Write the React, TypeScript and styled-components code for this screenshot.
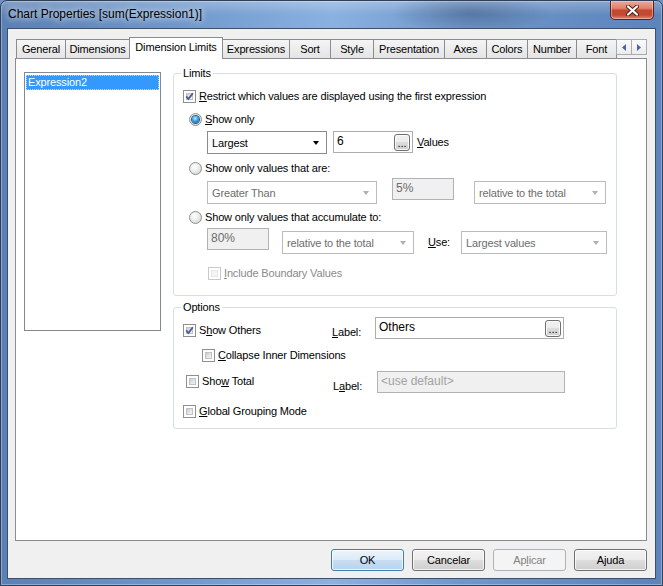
import React from "react";
import styled, { createGlobalStyle } from "styled-components";

const GlobalStyle = createGlobalStyle`
  html, body {
    margin: 0;
    padding: 0;
    background: #6f93c4;
  }
  body {
    font-family: "Liberation Sans", Arial, sans-serif;
    font-size: 11px;
    letter-spacing: -0.15px;
    color: #000;
  }
  *, *::before, *::after {
    box-sizing: border-box;
  }
`;

const Window = styled.div`
  width: 663px;
  height: 586px;
  display: flex;
  flex-direction: column;
  padding: 0 6px 6px;
  border: 1px solid #2f3f57;
  border-radius: 7px 7px 0 0;
  background:
    radial-gradient(ellipse 80px 20px at 470px 12px, rgba(40, 60, 95, 0.35), rgba(40, 60, 95, 0) 100%),
    linear-gradient(180deg, rgba(255, 255, 255, 0.25) 0, rgba(255, 255, 255, 0) 14px),
    linear-gradient(90deg, #5a80b4 0%, #7199cc 28%, #8ab1e0 50%, #7097ca 70%, #5c84bb 100%);
  box-shadow: inset 0 0 0 1px rgba(255, 255, 255, 0.3);
`;

const TitleBar = styled.div`
  height: 27px;
  display: flex;
  align-items: flex-start;
  justify-content: space-between;
`;

const Title = styled.div`
  padding-left: 1px;
  font-size: 12px;
  letter-spacing: 0;
  line-height: 27px;
  text-shadow: 0 0 6px rgba(255, 255, 255, 0.9), 0 0 10px rgba(255, 255, 255, 0.6);
`;

const CloseButton = styled.div`
  width: 44px;
  height: 19px;
  margin-right: 2px;
  display: flex;
  align-items: center;
  justify-content: center;
  border: 1px solid #5e2218;
  border-top: none;
  border-radius: 0 0 5px 5px;
  background: linear-gradient(180deg, #e9a99a 0%, #dc8270 40%, #c7452c 52%, #c24a33 78%, #dc8b73 100%);
  box-shadow: inset 0 0 0 1px rgba(255, 220, 210, 0.45);
`;

const Client = styled.div`
  flex: 1;
  display: flex;
  flex-direction: column;
  padding: 8px 8px 7px 7px;
  border: 1px solid #3e5069;
  background: #f0f0f0;
`;

const TabRow = styled.div`
  height: 21px;
  display: flex;
  align-items: flex-end;
  padding-left: 1px;
`;

const Tab = styled.div<{ $w: number; $active?: boolean }>`
  position: relative;
  z-index: ${(p) => (p.$active ? 2 : 1)};
  flex: none;
  width: ${(p) => p.$w}px;
  height: ${(p) => (p.$active ? 22 : 19)}px;
  margin-left: -1px;
  margin-bottom: ${(p) => (p.$active ? -1 : 0)}px;
  border: 1px solid #898c95;
  border-bottom: none;
  background: ${(p) => (p.$active ? "#fff" : "linear-gradient(180deg, #f5f5f5 0%, #e4e4e4 100%)")};
  text-align: center;
  line-height: 18px;
  white-space: nowrap;
  overflow: hidden;

  &:first-child {
    margin-left: 0;
  }
`;

const ScrollButtons = styled.div`
  position: relative;
  z-index: 3;
  display: flex;
  align-self: flex-start;
  margin-top: 2px;
  margin-left: -1px;
`;

const ScrollButton = styled.div`
  width: 16px;
  height: 16px;
  display: flex;
  align-items: center;
  justify-content: center;
  border: 1px solid #a9adb3;
  background: linear-gradient(180deg, #fbfbfb 0%, #ececec 100%);

  & + & {
    margin-left: -1px;
  }
`;

const TabPanel = styled.div`
  flex: 1;
  display: flex;
  align-items: flex-start;
  gap: 12px;
  padding: 8px 0 0 8px;
  border: 1px solid #898c95;
  background: #fff;
`;

const ListBox = styled.div`
  flex: none;
  width: 137px;
  height: 259px;
  margin-top: 5px;
  padding: 2px 1px;
  border: 1px solid #828790;
  background: #fff;
`;

const ListItem = styled.div<{ $selected?: boolean }>`
  height: 15px;
  padding-left: 1px;
  line-height: 13px;
  border: 1px dotted ${(p) => (p.$selected ? "#bcdcff" : "transparent")};
  background: ${(p) => (p.$selected ? "#3399ff" : "transparent")};
  color: ${(p) => (p.$selected ? "#fff" : "#000")};
`;

const Column = styled.div`
  flex: none;
  width: 444px;
  display: flex;
  flex-direction: column;
`;

const Group = styled.fieldset<{ $top?: number }>`
  margin: ${(p) => p.$top ?? 0}px 0 0 0;
  padding: 0;
  min-width: 0;
  border: 1px solid #d5dfe5;
  border-radius: 3px;
`;

const GroupTitle = styled.legend`
  margin-left: 7px;
  padding: 0 2px;
  line-height: 13px;
`;

const GroupBody = styled.div<{ $pb: number }>`
  display: flex;
  flex-direction: column;
  align-items: flex-start;
  padding: 0 0 ${(p) => p.$pb}px 9px;
`;

const Line = styled.div<{ $top?: number; $indent?: number; $w?: number }>`
  flex: none;
  display: flex;
  align-items: center;
  gap: 3px;
  height: 16px;
  width: ${(p) => (p.$w ? `${p.$w}px` : "auto")};
  margin-top: ${(p) => p.$top ?? 0}px;
  margin-left: ${(p) => p.$indent ?? 0}px;
`;

const ControlRow = styled.div<{ $top: number; $indent?: number; $h: number }>`
  display: flex;
  align-items: flex-start;
  height: ${(p) => p.$h}px;
  margin-top: ${(p) => p.$top}px;
  margin-left: ${(p) => p.$indent ?? 0}px;
`;

const Text = styled.span<{ $disabled?: boolean }>`
  white-space: nowrap;
  line-height: 16px;
  color: ${(p) => (p.$disabled ? "#8a8a8a" : "#000")};
`;

const U = styled.span`
  text-decoration: underline;
`;

const StaticLabel = styled.span<{ $w?: number; $top?: number; $ml?: number; $lh?: number }>`
  flex: none;
  width: ${(p) => (p.$w ? `${p.$w}px` : "auto")};
  margin-top: ${(p) => p.$top ?? 0}px;
  margin-left: ${(p) => p.$ml ?? 0}px;
  line-height: ${(p) => p.$lh ?? 16}px;
  white-space: nowrap;
`;

const CheckFrame = styled.span<{ $disabled?: boolean }>`
  position: relative;
  flex: none;
  display: flex;
  width: 13px;
  height: 13px;
  padding: 2px;
  border: 1px solid ${(p) => (p.$disabled ? "#c8c8c8" : "#8e8f8f")};
  background: #fff;
`;

const CheckFill = styled.span<{ $disabled?: boolean }>`
  flex: 1;
  border: 1px solid ${(p) => (p.$disabled ? "#e6e6e6" : "#bfc2c6")};
  background: ${(p) =>
    p.$disabled ? "#f4f4f4" : "linear-gradient(135deg, #c8cbcf 0%, #e4e5e7 55%, #f4f4f4 100%)"};
`;

const CheckMark = styled.svg`
  position: absolute;
  left: 0;
  top: 0;
`;

const RadioFrame = styled.span<{ $checked?: boolean }>`
  flex: none;
  display: flex;
  align-items: center;
  justify-content: center;
  width: 13px;
  height: 13px;
  border-radius: 50%;
  border: 1px solid #8e8f8f;
  background: radial-gradient(circle at 40% 35%, #ffffff 0%, #ececec 45%, #c9cccf 100%);

  &::after {
    content: "";
    display: ${(p) => (p.$checked ? "block" : "none")};
    width: 7px;
    height: 7px;
    border-radius: 50%;
    background: radial-gradient(circle at 45% 35%, #c2f0ff 0%, #3c9be0 45%, #0c4c8a 100%);
    box-shadow: 0 0 0 1px #1d5a93;
  }
`;

const Combo = styled.div<{ $w: number; $ml?: number; $top?: number; $disabled?: boolean }>`
  flex: none;
  display: flex;
  align-items: center;
  width: ${(p) => p.$w}px;
  height: 23px;
  margin-left: ${(p) => p.$ml ?? 0}px;
  margin-top: ${(p) => p.$top ?? 0}px;
  padding-left: 4px;
  border: 1px solid ${(p) => (p.$disabled ? "#b8bcbf" : "#8b8b8b")};
  background: #fff;
  color: ${(p) => (p.$disabled ? "#6d6d6d" : "#000")};
`;

const ComboValue = styled.span`
  flex: 1;
  white-space: nowrap;
  overflow: hidden;
`;

const ComboArrow = styled.span<{ $disabled?: boolean }>`
  flex: none;
  width: 0;
  height: 0;
  margin-right: 7px;
  border-left: 3.5px solid transparent;
  border-right: 3.5px solid transparent;
  border-top: 4px solid ${(p) => (p.$disabled ? "#b0b0b0" : "#000")};
`;

const TextBox = styled.div<{ $w: number; $ml?: number; $top?: number; $disabled?: boolean }>`
  flex: none;
  display: flex;
  align-items: flex-start;
  justify-content: space-between;
  width: ${(p) => p.$w}px;
  height: 22px;
  margin-left: ${(p) => p.$ml ?? 0}px;
  margin-top: ${(p) => p.$top ?? 0}px;
  padding: 2px 2px 0 3px;
  border: 1px solid ${(p) => (p.$disabled ? "#b0b3b6" : "#abadb3")};
  background: ${(p) => (p.$disabled ? "#f0f0f0" : "#fff")};
  color: ${(p) => (p.$disabled ? "#6d6d6d" : "#000")};
  font-size: 12px;
  letter-spacing: 0;
  line-height: 14px;
  white-space: nowrap;
`;

const Placeholder = styled.span`
  color: #a2a2a2;
`;

const EllipsisButton = styled.span`
  flex: none;
  display: flex;
  align-items: flex-end;
  justify-content: center;
  width: 16px;
  height: 17px;
  padding-bottom: 3px;
  border: 1px solid #707070;
  border-radius: 3px;
  background: linear-gradient(180deg, #f2f2f2 0%, #ebebeb 50%, #dddddd 50%, #cfcfcf 100%);
  box-shadow: inset 0 0 0 1px rgba(255, 255, 255, 0.8);
  color: #000;
  font-size: 11px;
  line-height: 8px;
  letter-spacing: 0;
`;

const ButtonRow = styled.div`
  display: flex;
  justify-content: flex-end;
  gap: 8px;
  margin-top: 8px;
`;

const DialogButton = styled.div<{ $kind?: "default" | "disabled" }>`
  width: 73px;
  height: 22px;
  display: flex;
  align-items: center;
  justify-content: center;
  border-radius: 3px;
  border: 1px solid
    ${(p) => (p.$kind === "default" ? "#3c7fb1" : p.$kind === "disabled" ? "#adb2b5" : "#707070")};
  background: ${(p) =>
    p.$kind === "default"
      ? "linear-gradient(180deg, #eaf4fc 0%, #dcebf8 50%, #c8ddf1 51%, #b9d4ee 100%)"
      : p.$kind === "disabled"
      ? "#f4f4f4"
      : "linear-gradient(180deg, #f2f2f2 0%, #ebebeb 50%, #dddddd 51%, #cfcfcf 100%)"};
  box-shadow: ${(p) => (p.$kind === "disabled" ? "none" : "inset 0 0 0 1px rgba(255, 255, 255, 0.75)")};
  color: ${(p) => (p.$kind === "disabled" ? "#838383" : "#000")};
`;

const tabs = [
  { label: "General", w: 50 },
  { label: "Dimensions", w: 65 },
  { label: "Dimension Limits", w: 94, active: true },
  { label: "Expressions", w: 68 },
  { label: "Sort", w: 42 },
  { label: "Style", w: 44 },
  { label: "Presentation", w: 72 },
  { label: "Axes", w: 43 },
  { label: "Colors", w: 42 },
  { label: "Number", w: 50 },
  { label: "Font", w: 41 },
];

function Check({ checked, disabled }: { checked?: boolean; disabled?: boolean }) {
  return (
    <CheckFrame $disabled={disabled}>
      <CheckFill $disabled={disabled} />
      {checked && (
        <CheckMark width="11" height="11" viewBox="0 0 11 11">
          <path d="M2.2 5.4 L4.4 8 L8.9 2.2" fill="none" stroke="#4a5c92" strokeWidth="1.8" />
        </CheckMark>
      )}
    </CheckFrame>
  );
}

function ArrowGlyph({ dir }: { dir: "left" | "right" }) {
  return (
    <svg width="4" height="7" viewBox="0 0 4 7">
      <path d={dir === "left" ? "M4 0 L0 3.5 L4 7 Z" : "M0 0 L4 3.5 L0 7 Z"} fill="#4c64a6" />
    </svg>
  );
}

export default function App() {
  return (
    <>
      <GlobalStyle />
      <Window>
        <TitleBar>
          <Title>Chart Properties [sum(Expression1)]</Title>
          <CloseButton>
            <svg width="13" height="11" viewBox="0 0 13 11">
              <path d="M2 1.5 L11 9.5 M11 1.5 L2 9.5" stroke="#4a1a10" strokeWidth="4" strokeLinecap="round" />
              <path d="M2 1.5 L11 9.5 M11 1.5 L2 9.5" stroke="#fff" strokeWidth="2.3" strokeLinecap="round" />
            </svg>
          </CloseButton>
        </TitleBar>

        <Client>
          <TabRow>
            {tabs.map((t) => (
              <Tab key={t.label} $w={t.w} $active={t.active}>
                {t.label}
              </Tab>
            ))}
            <ScrollButtons>
              <ScrollButton>
                <ArrowGlyph dir="left" />
              </ScrollButton>
              <ScrollButton>
                <ArrowGlyph dir="right" />
              </ScrollButton>
            </ScrollButtons>
          </TabRow>

          <TabPanel>
            <ListBox>
              <ListItem $selected>Expression2</ListItem>
            </ListBox>

            <Column>
              <Group>
                <GroupTitle>Limits</GroupTitle>
                <GroupBody $pb={14}>
                  <Line $top={8}>
                    <Check checked />
                    <Text>
                      <U>R</U>estrict which values are displayed using the first expression
                    </Text>
                  </Line>

                  <Line $top={7} $indent={6}>
                    <RadioFrame $checked />
                    <Text>
                      <U>S</U>how only
                    </Text>
                  </Line>
                  <ControlRow $top={4} $indent={24} $h={23}>
                    <Combo $w={120}>
                      <ComboValue>Largest</ComboValue>
                      <ComboArrow />
                    </Combo>
                    <TextBox $w={80} $ml={6}>
                      <span>6</span>
                      <EllipsisButton>...</EllipsisButton>
                    </TextBox>
                    <StaticLabel $ml={4} $lh={23}>
                      <U>V</U>alues
                    </StaticLabel>
                  </ControlRow>

                  <Line $top={6} $indent={6}>
                    <RadioFrame />
                    <Text>Show only values that are:</Text>
                  </Line>
                  <ControlRow $top={2} $indent={24} $h={26}>
                    <Combo $w={170} $top={3} $disabled>
                      <ComboValue>Greater Than</ComboValue>
                      <ComboArrow $disabled />
                    </Combo>
                    <TextBox $w={62} $ml={15} $disabled>
                      5%
                    </TextBox>
                    <Combo $w={132} $ml={20} $top={3} $disabled>
                      <ComboValue>relative to the total</ComboValue>
                      <ComboArrow $disabled />
                    </Combo>
                  </ControlRow>

                  <Line $top={5} $indent={6}>
                    <RadioFrame />
                    <Text>Show only values that accumulate to:</Text>
                  </Line>
                  <ControlRow $top={3} $indent={24} $h={26}>
                    <TextBox $w={62} $disabled>
                      80%
                    </TextBox>
                    <Combo $w={132} $ml={13} $top={3} $disabled>
                      <ComboValue>relative to the total</ComboValue>
                      <ComboArrow $disabled />
                    </Combo>
                    <StaticLabel $w={33} $ml={14} $top={3} $lh={23}>
                      <U>U</U>se:
                    </StaticLabel>
                    <Combo $w={146} $top={3} $disabled>
                      <ComboValue>Largest values</ComboValue>
                      <ComboArrow $disabled />
                    </Combo>
                  </ControlRow>

                  <Line $top={11} $indent={25}>
                    <Check disabled />
                    <Text $disabled>
                      <U>I</U>nclude Boundary Values
                    </Text>
                  </Line>
                </GroupBody>
              </Group>

              <Group $top={5}>
                <GroupTitle>Options</GroupTitle>
                <GroupBody $pb={9}>
                  <ControlRow $top={3} $h={22}>
                    <Line $w={149} $top={5}>
                      <Check checked />
                      <Text>
                        S<U>h</U>ow Others
                      </Text>
                    </Line>
                    <StaticLabel $w={43} $top={7}>
                      <U>L</U>abel:
                    </StaticLabel>
                    <TextBox $w={189}>
                      <span>Others</span>
                      <EllipsisButton>...</EllipsisButton>
                    </TextBox>
                  </ControlRow>

                  <Line $top={8} $indent={19}>
                    <Check />
                    <Text>
                      <U>C</U>ollapse Inner Dimensions
                    </Text>
                  </Line>

                  <ControlRow $top={8} $indent={3} $h={22}>
                    <Line $w={147} $top={2}>
                      <Check />
                      <Text>
                        Sho<U>w</U> Total
                      </Text>
                    </Line>
                    <StaticLabel $w={44} $top={7}>
                      L<U>a</U>bel:
                    </StaticLabel>
                    <TextBox $w={188} $disabled>
                      <Placeholder>&lt;use default&gt;</Placeholder>
                    </TextBox>
                  </ControlRow>

                  <Line $top={10}>
                    <Check />
                    <Text>
                      <U>G</U>lobal Grouping Mode
                    </Text>
                  </Line>
                </GroupBody>
              </Group>
            </Column>
          </TabPanel>

          <ButtonRow>
            <DialogButton $kind="default">OK</DialogButton>
            <DialogButton>Cancelar</DialogButton>
            <DialogButton $kind="disabled">
              Ap<U>l</U>icar
            </DialogButton>
            <DialogButton>Ajuda</DialogButton>
          </ButtonRow>
        </Client>
      </Window>
    </>
  );
}
